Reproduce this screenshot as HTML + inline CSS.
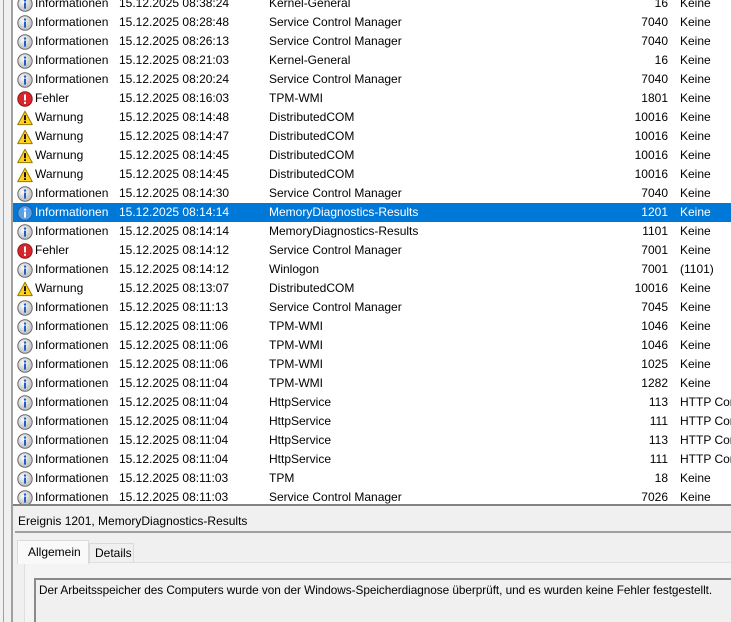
<!DOCTYPE html>
<html><head><meta charset="utf-8"><style>
*{margin:0;padding:0;box-sizing:border-box}
body{width:731px;height:622px;overflow:hidden;background:#f0f0f0;font-family:"Liberation Sans",sans-serif;font-size:12px;color:#000;position:relative}
.strip{position:absolute;left:0;top:0;width:13px;height:622px;background:#f0f0f0}
.l1{position:absolute;left:3px;top:0;width:1px;height:622px;background:#a0a0a0}
.l2{position:absolute;left:11px;top:0;width:2px;height:622px;background:#a0a0a0}
.list{position:absolute;left:13px;top:0;width:718px;height:506px;background:#fff;border-bottom:2px solid #828282;overflow:hidden}
.row{position:absolute;left:0;width:718px;height:19px;line-height:19px;white-space:nowrap}
.row.sel{background:#0078d7;color:#fff}
.row svg{position:absolute;left:4px;top:2px}
.row span{position:absolute}
.c1{left:22px}.c2{left:106px}.c3{left:256px}.c4{right:63px;text-align:right}.c5{left:667px}
.hdr{position:absolute;left:18px;top:514px}
.sep{position:absolute;left:15px;top:531px;width:716px;height:2px;background:#a0a0a0}
.tab1{position:absolute;left:17px;top:540px;width:72px;height:24px;background:#f9f9f9;border:1px solid #dadada;border-bottom:none;padding:4px 0 0 10px}
.tab2{position:absolute;left:89px;top:543px;width:45px;height:19px;background:#f0f0f0;border:1px solid #dadada;border-bottom:none;padding:2px 0 0 5px}
.pane{position:absolute;left:24px;top:562px;width:707px;height:60px;background:#f4f4f4;border-top:1px solid #e0e0e0;border-left:1px solid #e0e0e0}
.box{position:absolute;left:34px;top:578px;width:697px;height:44px;border-left:2px solid #8a8a8a;border-top:2px solid #8a8a8a;background:#f0f0f0;padding:3px 0 0 3px;white-space:nowrap;font-size:11.8px;letter-spacing:-0.05px}
</style></head><body>
<div class="strip"></div><div class="l1"></div><div class="l2"></div>
<div class="list" id="list">
</div>
<div class="hdr">Ereignis 1201, MemoryDiagnostics-Results</div>
<div class="sep"></div>
<div class="pane"></div>
<div class="tab2">Details</div>
<div class="tab1">Allgemein</div>
<div class="box">Der Arbeitsspeicher des Computers wurde von der Windows-Speicherdiagnose überprüft, und es wurden keine Fehler festgestellt.</div>
<script>
var I='<svg width="16" height="16"><defs><radialGradient id="g" cx="40%" cy="35%"><stop offset="0" stop-color="#fff"/><stop offset="1" stop-color="#c8c8c8"/></radialGradient></defs><circle cx="8" cy="8" r="7.2" fill="url(#g)" stroke="#6a6a6a"/><circle cx="8" cy="4.6" r="1.2" fill="#1e5fc8"/><rect x="7" y="6.6" width="2" height="6" fill="#1e5fc8"/></svg>';
var IS='<svg width="16" height="16"><circle cx="8" cy="8" r="7.2" fill="#5aa0e6" stroke="#2c5a9a"/><circle cx="8" cy="4.6" r="1.2" fill="#fff"/><rect x="7" y="6.6" width="2" height="6" fill="#fff"/></svg>';
var E='<svg width="16" height="16"><circle cx="8" cy="8" r="7.2" fill="#d8262c" stroke="#8a1a1a"/><rect x="7" y="3.5" width="2" height="6" fill="#fff"/><rect x="7" y="10.8" width="2" height="2" fill="#fff"/></svg>';
var W='<svg width="16" height="16"><path d="M8 1.2 L15.3 14.6 H0.7 Z" fill="#ffd21e" stroke="#9a7a00" stroke-linejoin="round"/><rect x="7.1" y="5.2" width="1.8" height="5" fill="#000"/><rect x="7.1" y="11.2" width="1.8" height="1.8" fill="#000"/></svg>';
var d=[
["I","08:38:24","Kernel-General","16","Keine"],
["I","08:28:48","Service Control Manager","7040","Keine"],
["I","08:26:13","Service Control Manager","7040","Keine"],
["I","08:21:03","Kernel-General","16","Keine"],
["I","08:20:24","Service Control Manager","7040","Keine"],
["E","08:16:03","TPM-WMI","1801","Keine"],
["W","08:14:48","DistributedCOM","10016","Keine"],
["W","08:14:47","DistributedCOM","10016","Keine"],
["W","08:14:45","DistributedCOM","10016","Keine"],
["W","08:14:45","DistributedCOM","10016","Keine"],
["I","08:14:30","Service Control Manager","7040","Keine"],
["S","08:14:14","MemoryDiagnostics-Results","1201","Keine"],
["I","08:14:14","MemoryDiagnostics-Results","1101","Keine"],
["E","08:14:12","Service Control Manager","7001","Keine"],
["I","08:14:12","Winlogon","7001","(1101)"],
["W","08:13:07","DistributedCOM","10016","Keine"],
["I","08:11:13","Service Control Manager","7045","Keine"],
["I","08:11:06","TPM-WMI","1046","Keine"],
["I","08:11:06","TPM-WMI","1046","Keine"],
["I","08:11:06","TPM-WMI","1025","Keine"],
["I","08:11:04","TPM-WMI","1282","Keine"],
["I","08:11:04","HttpService","113","HTTP Con"],
["I","08:11:04","HttpService","111","HTTP Con"],
["I","08:11:04","HttpService","113","HTTP Con"],
["I","08:11:04","HttpService","111","HTTP Con"],
["I","08:11:03","TPM","18","Keine"],
["I","08:11:03","Service Control Manager","7026","Keine"]];
var h='';
d.forEach(function(r,i){var ic={I:I,S:IS,E:E,W:W}[r[0]];var lv={I:"Informationen",S:"Informationen",E:"Fehler",W:"Warnung"}[r[0]];
h+='<div class="row'+(r[0]=="S"?' sel':'')+'" style="top:'+(-6+19*i)+'px">'+ic+'<span class="c1">'+lv+'</span><span class="c2">15.12.2025 '+r[1]+'</span><span class="c3">'+r[2]+'</span><span class="c4">'+r[3]+'</span><span class="c5">'+r[4]+'</span></div>';});
document.getElementById('list').innerHTML=h;
</script>
</body></html>
